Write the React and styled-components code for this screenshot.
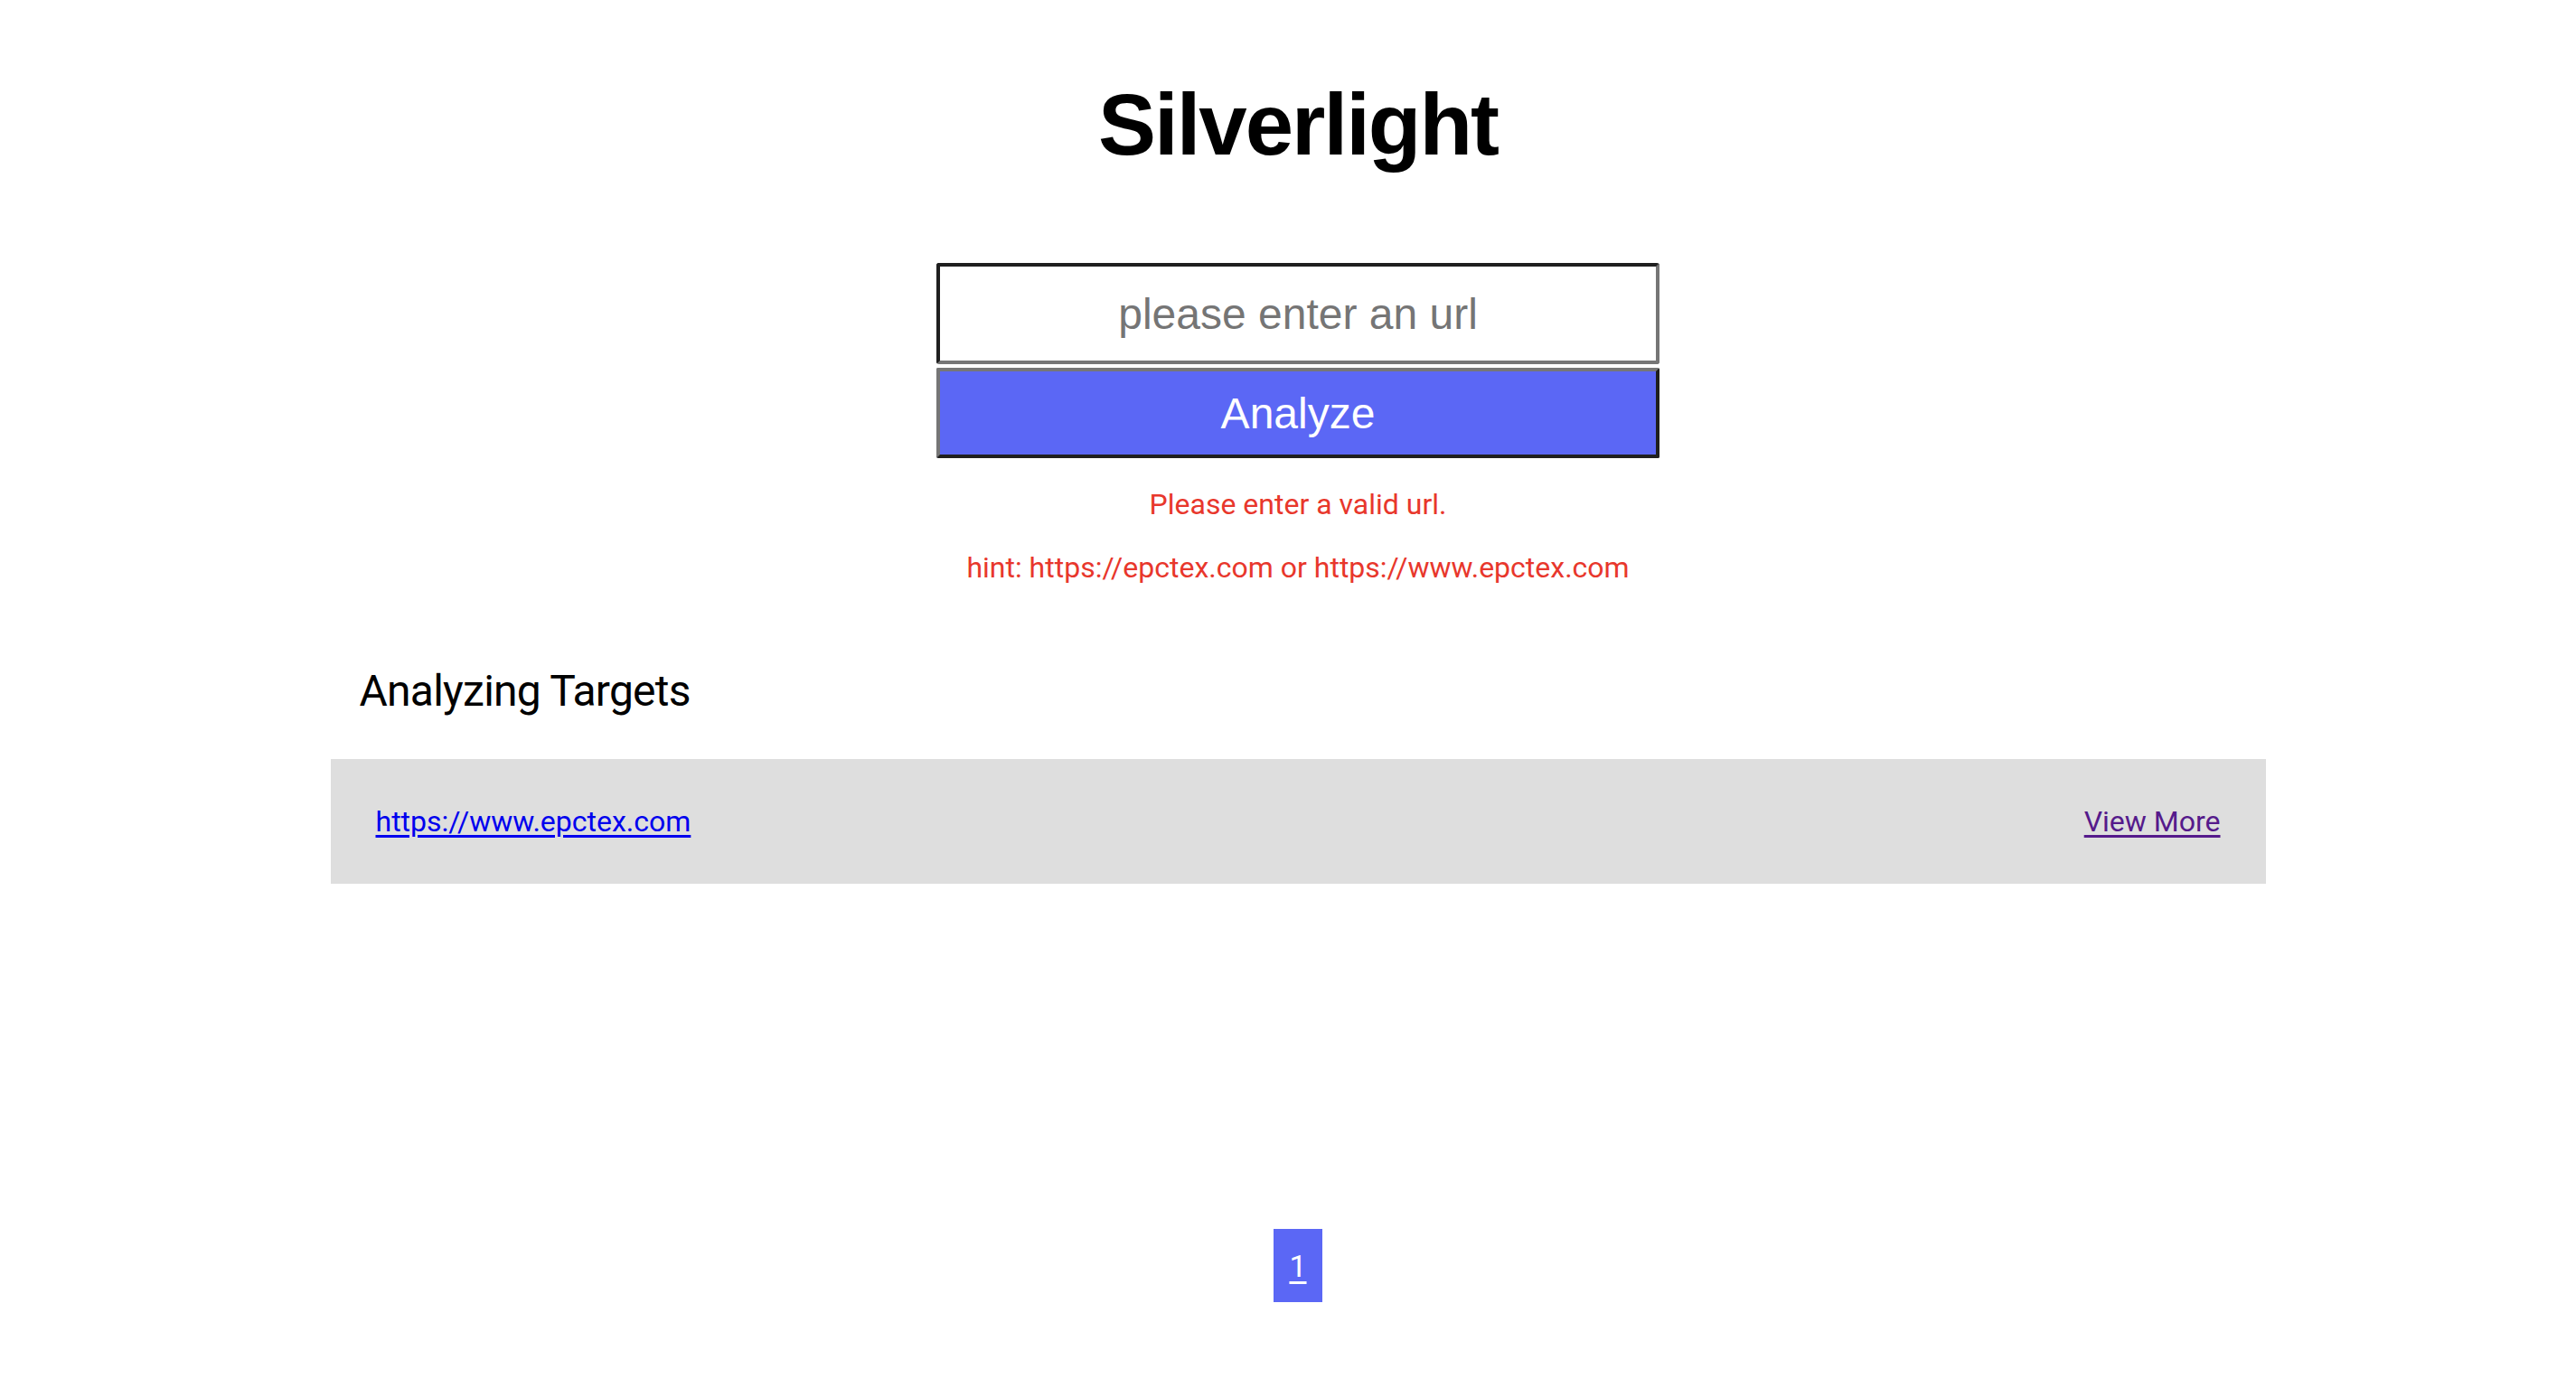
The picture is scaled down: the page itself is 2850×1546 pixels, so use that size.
import React from "react";
import styled, { createGlobalStyle } from "styled-components";

const GlobalStyle = createGlobalStyle`
  html, body { margin: 0; padding: 0; background: #ffffff; }
  body { font-family: Roboto, Inter, "Noto Sans", sans-serif; color: #000; }
`;

const Page = styled.div`
  box-sizing: border-box;
  width: 2850px;
  min-height: 1546px;
  padding: 83px 0 0 22px;
  display: flex;
  flex-direction: column;
  align-items: center;
`;

const Title = styled.h1`
  margin: 0;
  font-family: "Liberation Sans", Arial, sans-serif;
  font-weight: 700;
  font-size: 96px;
  line-height: 110px;
  letter-spacing: -2px;
  text-align: center;
`;

const Form = styled.form`
  margin-top: 98px;
  width: 800px;
  display: flex;
  flex-direction: column;
  gap: 4px;
`;

const UrlInput = styled.input`
  box-sizing: border-box;
  width: 100%;
  height: 112px;
  margin: 0;
  padding: 0 12px;
  border-style: solid;
  border-width: 4px;
  border-color: #1f1f1f #767676 #767676 #1f1f1f;
  border-radius: 3px;
  font-family: "Liberation Sans", Arial, sans-serif;
  font-size: 48px;
  text-align: center;
  color: #000;
  background: #fff;
  outline: none;
  &::placeholder { color: #757575; }
`;

const AnalyzeButton = styled.button`
  box-sizing: border-box;
  width: 100%;
  height: 100px;
  margin: 0;
  border-style: solid;
  border-width: 4px;
  border-color: #767676 #1f1f1f #1f1f1f #767676;
  border-radius: 2px;
  background: #5b67f5;
  color: #ffffff;
  font-family: "Liberation Sans", Arial, sans-serif;
  font-size: 48px;
  cursor: pointer;
`;

const Message = styled.p`
  margin: ${(p) => p.$top}px 0 0;
  font-size: 32px;
  line-height: 40px;
  color: #e8372c;
  text-align: center;
`;

const Section = styled.section`
  margin-top: 89px;
  width: 2141px;
  display: flex;
  flex-direction: column;
`;

const SectionTitle = styled.h2`
  margin: 0 0 47px 32px;
  font-weight: 400;
  font-size: 48px;
  line-height: 56px;
  letter-spacing: -0.75px;
`;

const TargetRow = styled.div`
  box-sizing: border-box;
  height: 138px;
  padding: 0 50px;
  background: #dedede;
  display: flex;
  align-items: center;
  justify-content: space-between;
`;

const RowLink = styled.a`
  font-size: 32px;
  line-height: 40px;
  color: ${(p) => (p.$visited ? "#551a8b" : "#0000ee")};
  text-decoration: underline;
  text-underline-offset: 4px;
`;

const Pagination = styled.nav`
  margin-top: 382px;
  display: flex;
  gap: 8px;
`;

const PageButton = styled.a`
  box-sizing: border-box;
  width: 54px;
  height: 81px;
  display: flex;
  align-items: center;
  justify-content: center;
  background: #5b67f5;
  color: #ffffff;
  font-size: 34px;
  text-decoration: underline;
  text-underline-offset: 5px;
`;

export default function App() {
  return (
    <>
      <GlobalStyle />
      <Page>
        <Title>Silverlight</Title>
        <Form onSubmit={(e) => e.preventDefault()}>
          <UrlInput type="text" placeholder="please enter an url" />
          <AnalyzeButton type="submit">Analyze</AnalyzeButton>
        </Form>
        <Message $top={31}>Please enter a valid url.</Message>
        <Message $top={30}>hint: https://epctex.com or https://www.epctex.com</Message>
        <Section>
          <SectionTitle>Analyzing Targets</SectionTitle>
          <TargetRow>
            <RowLink href="#">https://www.epctex.com</RowLink>
            <RowLink href="#" $visited>View More</RowLink>
          </TargetRow>
        </Section>
        <Pagination>
          <PageButton href="#">1</PageButton>
        </Pagination>
      </Page>
    </>
  );
}
